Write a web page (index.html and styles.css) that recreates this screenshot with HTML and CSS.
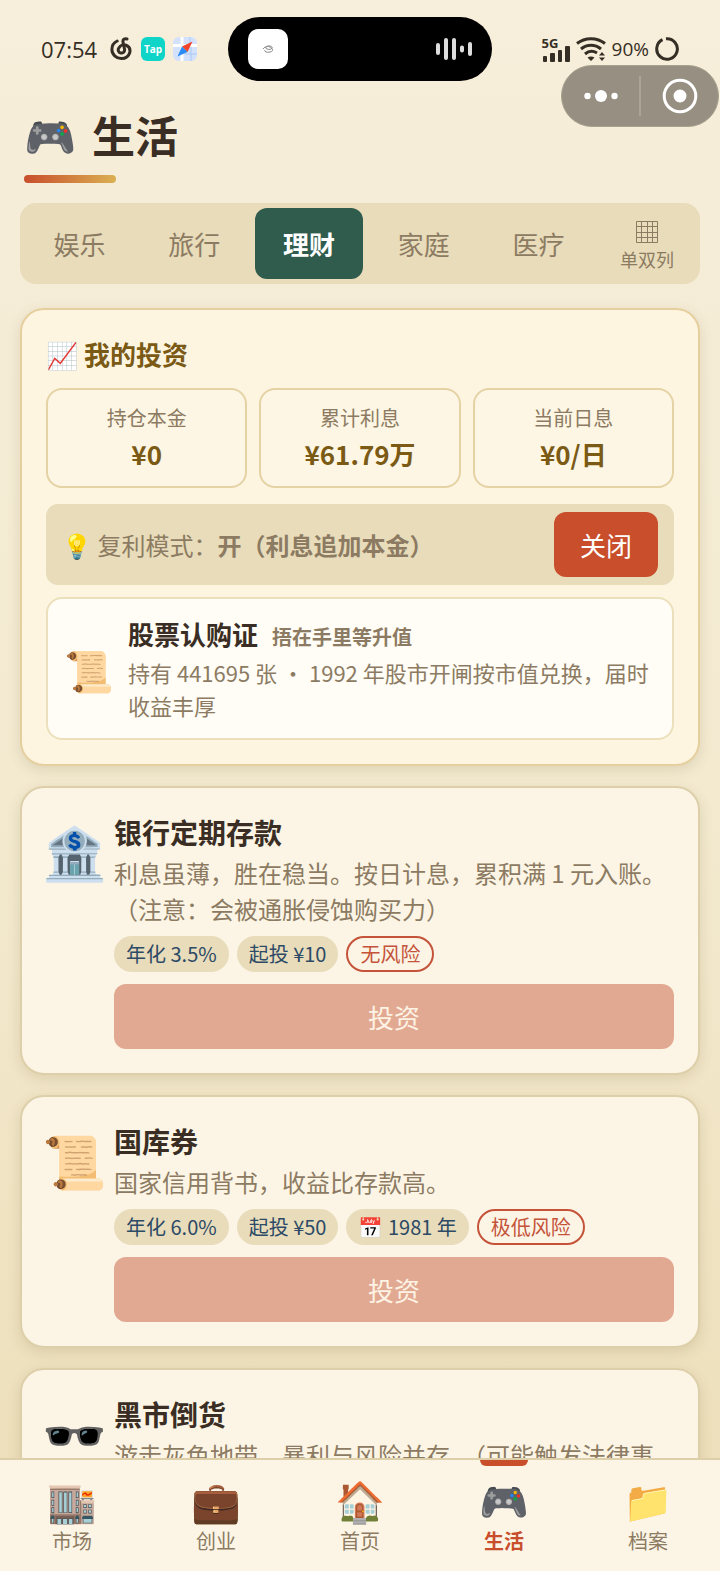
FILE: index.html
```html
<!doctype html>
<html lang="zh-CN">
<head>
  <meta charset="utf-8">

  <meta name="viewport" content="width=device-width, initial-scale=1">

  <title>生活</title>

  <link rel="stylesheet" href="styles.css">

</head>
<body>

  <div class="status-bar">
    <div class="status-left">
      <span class="clock">07:54</span>
      <svg class="status-icon" viewBox="0 0 24 24" fill="none" stroke="#352e25" stroke-width="3" stroke-linecap="round">
        <path d="M18 2c-2.500-.8-4.500.5-4 3l1.600 7.500a3.200 3.200 0 1 1-5.800-1.500c1.500-2.800 4.700-4 7.200-2.800 3.200 1.500 4.600 4.600 3.600 7.800-1.200 3.700-4.600 5.600-8.400 5.500-5-.2-9.300-4-9.300-9 0-3.600 2-7 5.300-8.500"/>
      </svg>
      <span class="app-badge">Tap</span>
      <svg class="status-icon" viewBox="0 0 24 24">
        <rect width="24" height="24" rx="6" fill="#d3e1fb"/>
        <path d="M0 8.500h24M9 0v24" stroke="#fff" stroke-width="3"/>
        <path d="M12 17h12M18 10v14M17 0v7" stroke="#a9c8f7" stroke-width="1"/>
        <path d="M19.500 4.500L9 9.500l5.500 5.500z" fill="#f2452c"/>
        <path d="M4.500 19.500L9 9.500l5.500 5.500z" fill="#2b8cf5"/>
      </svg>
    </div>

    <div class="island">
      <svg class="island-app" viewBox="0 0 40 40">
        <rect width="40" height="40" rx="10" fill="#fff"/>
        <path d="M15 20c2-3 8-4 9-2s-2 3-5 2 0-4 3-2 4 4 0 5-6-1-5-2" fill="none" stroke="#888" stroke-width="1"/>
      </svg>
      <svg class="island-wave" viewBox="0 0 36 24" stroke="#ddd" stroke-width="4" stroke-linecap="round">
        <path d="M2 8v8M10 3v18M18 3v18M26 10.500v3M34 7v10"/>
      </svg>
    </div>

    <div class="status-right">
      <div class="signal">
        <span>5G</span>
        <svg width="28" height="16" viewBox="0 0 28 16" fill="#352e25">
          <rect x="1" y="10" width="4" height="6" rx="1"/>
          <rect x="8" y="7" width="5" height="9" rx="1"/>
          <rect x="16" y="4" width="4" height="12" rx="1"/>
          <rect x="23" y="0" width="5" height="16" rx="1"/>
        </svg>
      </div>
      <svg class="wifi" viewBox="0 0 30 24" fill="none" stroke="#352e25" stroke-width="3">
        <path d="M1 6.500c8-6.500 20-6.500 28 0M5 12c6-5 14-5 20 0M9 17c4-3.500 8-3.500 12-1"/>
        <path d="M11.500 20.500q3.500-2 7 0L15 24zM23 18.500l3-3.500 3 3.500zM23 20.500h6l-3 3.500z" fill="#352e25" stroke="none"/>
      </svg>
      <span class="battery">90%</span>
      <svg class="status-icon" viewBox="0 0 24 24" fill="none" stroke="#352e25" stroke-width="3">
        <path d="M11 1.700A10.300 10.300 0 1 1 7.500 2.700"/>
      </svg>
    </div>
  </div>

  <div class="capsule">
    <button class="capsule-btn" aria-label="更多">
      <svg width="34" height="12" viewBox="0 0 34 12" fill="#fff">
        <circle cx="3.500" cy="6" r="3.200"/>
        <circle cx="17" cy="6" r="6"/>
        <circle cx="30.500" cy="6" r="3.200"/>
      </svg>
    </button>
    <button class="capsule-btn" aria-label="关闭小程序">
      <svg width="36" height="36" viewBox="0 0 36 36">
        <circle cx="18" cy="18" r="15.800" fill="none" stroke="#fff" stroke-width="3"/>
        <circle cx="18" cy="18" r="6.500" fill="#fff"/>
      </svg>
    </button>
  </div>

  <header class="page-header">
    <h1><span class="title-icon">🎮</span>生活</h1>
  </header>

  <nav class="tabs">
    <button class="tab">娱乐</button>
    <button class="tab">旅行</button>
    <button class="tab active">理财</button>
    <button class="tab">家庭</button>
    <button class="tab">医疗</button>
    <button class="tab-layout">
      <svg width="22" height="22" viewBox="0 0 22 22" fill="none" stroke="#8c7b62" stroke-width="1">
        <path d="M.5.5h21v21H.5zM5.500.5v21M11.500.5v21M16.500.5v21M.5 5.500h21M.5 11.500h21M.5 16.500h21"/>
      </svg>
      单双列
    </button>
  </nav>

  <main class="content">

    <section class="card summary">
      <h2><span class="emoji">📈</span> 我的投资</h2>
      <div class="stats">
        <div class="stat">
          <div class="stat-label">持仓本金</div>
          <div class="stat-value">¥0</div>
        </div>
        <div class="stat">
          <div class="stat-label">累计利息</div>
          <div class="stat-value">¥61.79万</div>
        </div>
        <div class="stat">
          <div class="stat-label">当前日息</div>
          <div class="stat-value">¥0/日</div>
        </div>
      </div>
      <div class="compound">
        <span>💡 复利模式：<b>开（利息追加本金）</b></span>
        <button class="btn">关闭</button>
      </div>
      <div class="holding">
        <div class="holding-icon">📜</div>
        <div class="holding-body">
          <h3>股票认购证 <small>捂在手里等升值</small></h3>
          <p>持有 441695 张 · 1992 年股市开闸按市值兑换，届时收益丰厚</p>
        </div>
      </div>
    </section>

    <section class="card product">
      <div class="product-icon">🏦</div>
      <div class="product-body">
        <h3>银行定期存款</h3>
        <p>利息虽薄，胜在稳当。按日计息，累积满 1 元入账。（注意：会被通胀侵蚀购买力）</p>
        <div class="tags">
          <span class="tag">年化 3.5%</span>
          <span class="tag">起投 ¥10</span>
          <span class="tag risk">无风险</span>
        </div>
        <button class="btn invest" disabled>投资</button>
      </div>
    </section>

    <section class="card product">
      <div class="product-icon">📜</div>
      <div class="product-body">
        <h3>国库券</h3>
        <p>国家信用背书，收益比存款高。</p>
        <div class="tags">
          <span class="tag">年化 6.0%</span>
          <span class="tag">起投 ¥50</span>
          <span class="tag">📅 1981 年</span>
          <span class="tag risk">极低风险</span>
        </div>
        <button class="btn invest" disabled>投资</button>
      </div>
    </section>

    <section class="card product">
      <div class="product-icon">🕶️</div>
      <div class="product-body">
        <h3>黑市倒货</h3>
        <p>游走灰色地带，暴利与风险并存。（可能触发法律事件）</p>
        <button class="btn invest" disabled>投资</button>
      </div>
    </section>

  </main>

  <nav class="tab-bar">
    <a href="#market"><span class="bar-icon">🏬</span>市场</a>
    <a href="#business"><span class="bar-icon">💼</span>创业</a>
    <a href="#home"><span class="bar-icon">🏠</span>首页</a>
    <a href="#life" class="active"><span class="bar-icon">🎮</span>生活</a>
    <a href="#files"><span class="bar-icon">📁</span>档案</a>
  </nav>

</body>
</html>
```

FILE: styles.css
```css
* {
  box-sizing: border-box;
  margin: 0;
  padding: 0;
}

body {
  position: relative;
  display: flex;
  flex-direction: column;
  height: 100vh;
  overflow: hidden;
  background: linear-gradient(#f7eedb, #f3ead0 50%, #eddeb8);
  color: #3a2e24;
  font-family: "Noto Sans CJK SC", "Noto Sans", sans-serif;
}

button {
  border: none;
  background: none;
  font: inherit;
}

svg {
  display: block;
}

/* status bar */

.status-bar {
  display: flex;
  align-items: center;
  justify-content: space-between;
  flex: none;
  padding: 17px 41px 0;
  color: #352e25;
}

.status-left,
.status-right {
  display: flex;
  align-items: center;
  flex: 1;
}

.status-left {
  gap: 8px;
}

.status-right {
  justify-content: flex-end;
  gap: 6px;
}

.clock,
.battery {
  font-family: "Open Sans", sans-serif;
  font-size: 22px;
  line-height: 24px;
}

.clock {
  margin-right: 4px;
}

.battery {
  font-size: 19px;
}

.status-icon {
  width: 24px;
  height: 24px;
}

.app-badge {
  width: 24px;
  border-radius: 6px;
  background: #0fd5c8;
  color: #fff;
  font: bold 10px/24px "Open Sans", sans-serif;
  text-align: center;
}

.signal {
  font: bold 13px/13px "Open Sans", sans-serif;
}

.signal span {
  display: block;
  margin-bottom: -4px;
}

.wifi {
  width: 30px;
  height: 24px;
}

.island {
  display: flex;
  align-items: center;
  justify-content: space-between;
  width: 264px;
  height: 64px;
  padding: 0 20px;
  border-radius: 32px;
  background: #000;
}

.island-app {
  width: 40px;
  height: 40px;
}

.island-wave {
  width: 36px;
  height: 24px;
}

.capsule {
  position: absolute;
  top: 65px;
  right: 1px;
  display: flex;
  width: 158px;
  height: 62px;
  border: 1px solid #aaa18f;
  border-radius: 31px;
  background: #979082;
}

.capsule-btn {
  display: flex;
  align-items: center;
  justify-content: center;
  flex: 1;
}

.capsule-btn + .capsule-btn {
  margin: 10px 0;
  border-left: 2px solid #aca596;
}

/* header */

.page-header {
  flex: none;
  padding: 20px 24px;
}

.page-header h1 {
  display: flex;
  align-items: center;
  gap: 16px;
  font-size: 43px;
  line-height: 66px;
}

.page-header h1 .title-icon {
  font-size: 42px;
  font-weight: normal;
}

.page-header::after {
  content: '';
  display: block;
  width: 92px;
  height: 8px;
  margin-top: 8px;
  border-radius: 4px;
  background: linear-gradient(90deg, #c84e2c, #dbb052);
}

/* tabs */

.tabs {
  display: flex;
  flex: none;
  gap: 6px;
  margin: 0 20px;
  padding: 5px;
  border-radius: 16px;
  background: #e8dcba;
}

.tab,
.tab-layout {
  color: #8c7b62;
}

.tab {
  flex: 1;
  height: 71px;
  border-radius: 12px;
  font-size: 26px;
}

.tab.active {
  background: #305c4d;
  color: #fff;
  font-weight: bold;
}

.tab-layout {
  display: flex;
  flex-direction: column;
  align-items: center;
  justify-content: flex-end;
  gap: 4px;
  width: 96px;
  padding-bottom: 8px;
  font-size: 18px;
  line-height: 24px;
}

/* cards */

.content {
  display: flex;
  flex: 1;
  flex-direction: column;
  gap: 20px;
  min-height: 0;
  overflow: hidden;
  padding: 24px 20px;
}

.card {
  flex: none;
  padding: 24px;
  border: 2px solid #dccfa9;
  border-radius: 24px;
  background: #fcf5e5;
  box-shadow: 0 4px 14px rgba(100, 75, 30, 0.14);
}

.summary {
  border-color: #e6cf9f;
  background: #fdf5e0;
}

.summary h2 {
  margin-bottom: 14px;
  color: #7a5a14;
  font-size: 26px;
  line-height: 40px;
}

.summary h2 .emoji {
  font-weight: normal;
}

.stats {
  display: flex;
  gap: 12px;
}

.stat {
  flex: 1;
  padding: 12px 0;
  border: 2px solid #e5d2a5;
  border-radius: 16px;
  background: #fdf6e4;
  text-align: center;
}

.stat-label {
  color: #8c7b62;
  font-size: 20px;
  line-height: 32px;
}

.stat-value {
  color: #7a5a14;
  font-size: 26px;
  font-weight: bold;
  line-height: 40px;
}

.compound {
  display: flex;
  align-items: center;
  justify-content: space-between;
  margin: 16px 0 12px;
  padding: 8px 16px;
  border-radius: 12px;
  background: #e8dcba;
  color: #8c7b62;
  font-size: 24px;
}

.btn {
  height: 65px;
  padding: 0 26px;
  border-radius: 12px;
  background: #c84e2c;
  color: #fff;
  font-size: 26px;
}

.holding {
  display: flex;
  align-items: center;
  gap: 16px;
  padding: 16px;
  border: 2px solid #ecdfbc;
  border-radius: 16px;
  background: #fffdf6;
}

.holding-icon {
  width: 48px;
  font-size: 40px;
  line-height: 48px;
  text-align: center;
}

.holding-body {
  flex: 1;
}

.holding h3 {
  font-size: 26px;
  line-height: 38px;
}

.holding small {
  margin-left: 8px;
  color: #8c7b62;
  font-size: 20px;
}

.holding p {
  color: #8c7b62;
  font-size: 22px;
  line-height: 33px;
}

.product {
  display: flex;
  gap: 12px;
}

.product-icon {
  display: flex;
  justify-content: center;
  width: 56px;
  padding-top: 6px;
  font-size: 52px;
  line-height: 64px;
}

.product-body {
  flex: 1;
}

.product h3 {
  margin-bottom: 3px;
  font-size: 28px;
  line-height: 40px;
}

.product p {
  color: #8c7b62;
  font-size: 24px;
  line-height: 36px;
}

.tags {
  display: flex;
  gap: 8px;
  margin: 9px 0 12px;
}

.tag {
  padding: 0 12px;
  border-radius: 18px;
  background: #e8dcba;
  color: #2d4a66;
  font-size: 20px;
  line-height: 36px;
}

.tag.risk {
  border: 2px solid #c4533a;
  background: none;
  color: #c4533a;
  line-height: 32px;
}

.invest {
  display: block;
  width: 100%;
}

.invest:disabled {
  background: #e2a992;
  color: #fdf3e4;
}

/* bottom bar */

.tab-bar {
  display: flex;
  flex: none;
  border-top: 2px solid #ddcfaa;
  background: #fcf5e6;
}

.tab-bar a {
  position: relative;
  display: flex;
  flex: 1;
  flex-direction: column;
  align-items: center;
  padding: 14px 0;
  color: #8c7b62;
  font-size: 20px;
  line-height: 32px;
  text-decoration: none;
}

.bar-icon {
  margin-bottom: 1px;
  font-size: 40px;
  font-weight: normal;
  line-height: 50px;
}

.tab-bar .active {
  color: #c84e2c;
  font-weight: bold;
}

.tab-bar .active::before {
  content: '';
  position: absolute;
  top: 0;
  width: 48px;
  height: 6px;
  border-radius: 0 0 6px 6px;
  background: #c84e2c;
}
```
